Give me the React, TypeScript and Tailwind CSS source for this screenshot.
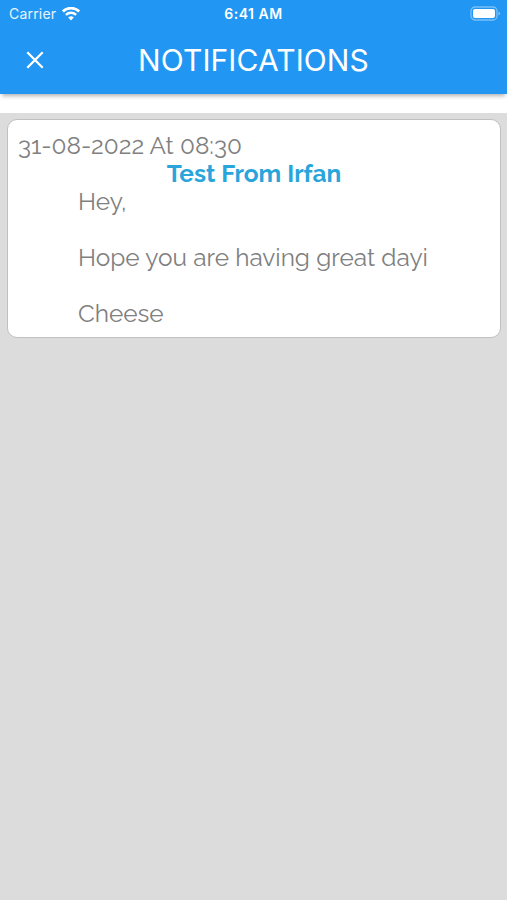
type Notification = {
  date: string
  title: string
  lines: string[]
}

const notifications: Notification[] = [
  {
    date: '31-08-2022 At 08:30',
    title: 'Test From Irfan',
    lines: ['Hey,', 'Hope you are having great dayi', 'Cheese'],
  },
]

const WifiIcon = () => (
  <svg width="18" height="14" viewBox="0 0 18 14" fill="none">
    <path d="M.8 4.4a11.9 11.9 0 0 1 16.4 0" stroke="white" strokeWidth="2.7" />
    <path d="M3.9 7.8a7.4 7.4 0 0 1 10.2 0" stroke="white" strokeWidth="2.4" />
    <path d="M9 13.4 6.2 10.6a4 4 0 0 1 5.6 0z" fill="white" />
  </svg>
)

const BatteryIcon = () => (
  <svg width="31" height="15" viewBox="0 0 31 15" fill="none">
    <rect x="1" y="1" width="26" height="13" rx="4" stroke="white" strokeOpacity="0.4" strokeWidth="1.3" />
    <rect x="3" y="3" width="22" height="9" rx="2" fill="white" />
    <path d="M28.5 5.4c1.9.7 1.9 3.5 0 4.2z" fill="white" fillOpacity="0.5" />
  </svg>
)

const StatusBar = () => (
  <div className="grid h-[27px] grid-cols-3 items-center text-[14px]">
    <div className="flex items-center gap-[6px] pl-[9px]">
      <span className="tracking-[0.2px] text-white/90">Carrier</span>
      <WifiIcon />
    </div>
    <div className="text-center text-[14px] font-semibold tracking-[0.5px]">6:41 AM</div>
    <div className="flex justify-end pr-[6px]">
      <BatteryIcon />
    </div>
  </div>
)

const Header = () => (
  <header className="relative h-[94px] bg-[#2196f3] text-white shadow-[0_4px_4px_-2px_rgba(0,0,0,0.3)]">
    <StatusBar />
    <div className="grid h-[65px] grid-cols-[70px_1fr_70px] items-center">
      <button className="flex justify-center" aria-label="Close">
        <svg width="18" height="18" viewBox="0 0 18 18">
          <path d="m1.3 1.3 15.4 15.4m0-15.4L1.3 16.7" stroke="white" strokeWidth="2.3" />
        </svg>
      </button>
      <h1 className="text-center text-[30px] leading-none tracking-[0.1px] whitespace-nowrap">
        NOTIFICATIONS
      </h1>
    </div>
  </header>
)

const Card = ({ date, title, lines }: Notification) => (
  <article className="h-[219px] rounded-[10px] border border-[#c0c0c0] bg-white px-[10px] pt-[12px] font-['Raleway',sans-serif] text-[24.4px] leading-[28px] text-[#808080]">
    <p>{date}</p>
    <h2 className="text-center font-bold text-[#2aa5dc]">{title}</h2>
    <div className="flex flex-col gap-[28px] pl-[60px]">
      {lines.map((line) => (
        <p key={line}>{line}</p>
      ))}
    </div>
  </article>
)

export default function App() {
  return (
    <div className="flex h-[900px] w-[507px] flex-col overflow-hidden bg-white font-['Inter',sans-serif]">
      <Header />
      <main className="mt-[19px] flex-1 bg-[#dcdcdc] pt-[6px] pr-[6px] pl-[7px]">
        {notifications.map((item) => (
          <Card key={item.date} {...item} />
        ))}
      </main>
    </div>
  )
}
